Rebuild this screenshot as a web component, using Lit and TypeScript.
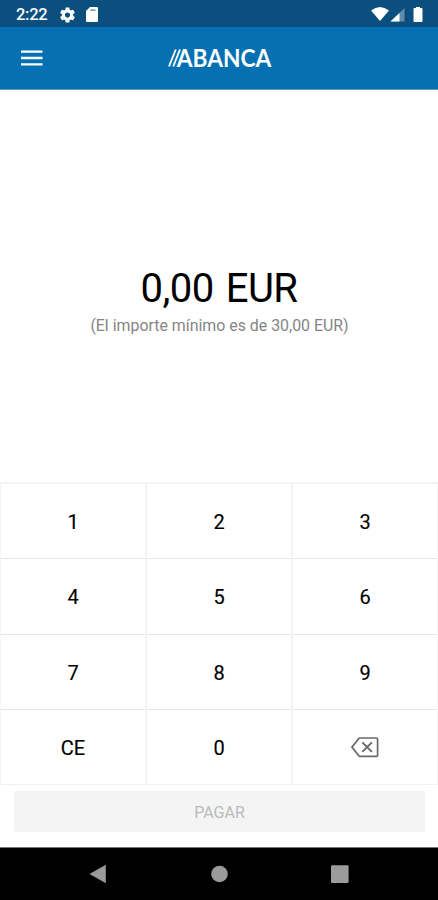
import { LitElement, html, css, svg } from "lit";
import { customElement } from "lit/decorators.js";

const backspace = svg`
  <path d="M8.2 1H25.6Q26.6 1 26.6 2V18.3Q26.6 19.3 25.6 19.3H8.2L1 10.15Z" fill="none" stroke="#6a6a6a" stroke-width="1.7" stroke-linejoin="round"/>
  <path d="M11.3 5.4L20.9 14.9M20.9 5.4L11.3 14.9" stroke="#6a6a6a" stroke-width="2"/>`;

@customElement("app-root")
export class AppRoot extends LitElement {
  static styles = css`
    :host {
      display: flex;
      flex-direction: column;
      width: 438px;
      height: 900px;
      background: #fff;
      font-family: Roboto, "Liberation Sans", sans-serif;
      color: #000;
      overflow: hidden;
    }
    svg { display: block; flex: none; }
    .status {
      height: 27px;
      background: #0a4f7d;
      color: #fff;
      display: flex;
      align-items: center;
      padding: 2px 15px 0 16px;
      box-sizing: border-box;
      flex: none;
    }
    .time { font-size: 16.5px; font-weight: 500; width: 44px; line-height: 20px; letter-spacing: -0.3px; }
    .sd { margin-left: 11px; }
    .grow { flex: 1; }
    .bar {
      height: 63px;
      box-sizing: border-box;
      border-bottom: 1px solid #5d9bc7;
      background: #0571b3;
      display: grid;
      grid-template-columns: 64px 1fr 64px;
      align-items: center;
      flex: none;
    }
    .menu { margin-left: 21px; }
    .logo { margin: 0 auto 0 104px; }
    .brand { font: 700 24px Lato, sans-serif; fill: #fff; }
    .amount {
      flex: 1;
      display: flex;
      flex-direction: column;
      align-items: center;
      padding-top: 174px;
      box-sizing: border-box;
    }
    .total { font-size: 40px; line-height: 50px; letter-spacing: -0.6px; word-spacing: 3px; white-space: nowrap; }
    .hint { font-size: 15.9px; line-height: 24px; color: #858585; white-space: nowrap; padding-left: 1px; }
    .keys {
      flex: none;
      height: 303px;
      box-sizing: border-box;
      display: grid;
      grid-template-columns: repeat(3, 1fr);
      grid-template-rows: repeat(4, 1fr);
      column-gap: 2px;
      padding: 2px 1px 0 1px;
      background: #f4f4f4;
    }
    .key {
      background: #fff;
      display: flex;
      align-items: center;
      justify-content: center;
      font-size: 20px;
      -webkit-text-stroke: 0.15px #000;
      padding-top: 2px;
      border-bottom: 1px solid #e7e7e7;
    }
    .key:nth-last-child(-n + 3) { border-bottom-color: #f2f2f2; }
    .pay {
      flex: none;
      height: 41px;
      margin: 6px 13.5px 15px 13.5px;
      background: #f4f4f4;
      border-radius: 2px;
      color: #bababa;
      display: flex;
      align-items: center;
      justify-content: center;
      font-size: 16px;
      padding-top: 1px;
      padding-left: 1px;
      box-sizing: border-box;
    }
    .nav { flex: none; height: 53px; background: #000; border-top: 1px solid #777; box-sizing: border-box; }
  `;

  render() {
    const keys = ["1", "2", "3", "4", "5", "6", "7", "8", "9", "CE", "0", ""];
    return html`
      <div class="status">
        <span class="time">2:22</span>
        <svg width="15" height="16" viewBox="2 2 20 20"><path fill="#fff" d="M19.43 12.98c.04-.32.07-.64.07-.98s-.03-.66-.07-.98l2.11-1.65c.19-.15.24-.42.12-.64l-2-3.46c-.12-.22-.39-.3-.61-.22l-2.49 1c-.52-.4-1.08-.73-1.69-.98l-.38-2.65C14.46 2.18 14.25 2 14 2h-4c-.25 0-.46.18-.49.42l-.38 2.65c-.61.25-1.17.59-1.69.98l-2.49-1c-.23-.09-.49 0-.61.22l-2 3.46c-.13.22-.07.49.12.64l2.11 1.65c-.04.32-.07.65-.07.98s.03.66.07.98l-2.11 1.65c-.19.15-.24.42-.12.64l2 3.46c.12.22.39.3.61.22l2.49-1c.52.4 1.08.73 1.69.98l.38 2.65c.03.24.24.42.49.42h4c.25 0 .46-.18.49-.42l.38-2.65c.61-.25 1.17-.59 1.69-.98l2.49 1c.23.09.49 0 .61-.22l2-3.46c.12-.22.07-.49-.12-.64l-2.11-1.65zM12 15.5c-1.93 0-3.5-1.57-3.5-3.5s1.57-3.5 3.5-3.5 3.5 1.57 3.5 3.5-1.57 3.5-3.5 3.5z"/></svg>
        <svg class="sd" width="12" height="15" viewBox="0 0 12 15"><path fill="#fff" d="M4 0H10.8Q12 0 12 1.2V13.8Q12 15 10.8 15H1.2Q0 15 0 13.8V4Z"/><path d="M4.2 3.1H9.6" stroke="#6d93b0" stroke-width="1.4"/></svg>
        <span class="grow"></span>
        <svg width="52" height="16" viewBox="0 0 52 16">
          <path fill="#fff" d="M0 3.5Q9 -3.5 18 3.5L9 14Z"/>
          <path fill="#5f8cab" d="M33.5 1V14.5H19.5Z"/>
          <path fill="#fff" d="M28.5 6V14.5H19.5Z"/>
          <path fill="#fff" d="M43.4 1.1H45V0H49V1.1H50.6Q51.5 1.1 51.5 2V14Q51.5 14.9 50.6 14.9H43.4Q42.5 14.9 42.5 14V2Q42.5 1.1 43.4 1.1Z"/>
        </svg>
      </div>
      <div class="bar">
        <svg class="menu" width="22" height="16" viewBox="0 0 22 16"><path d="M0 1.6H21.5M0 8H21.5M0 14.4H21.5" stroke="#fff" stroke-width="2.4"/></svg>
        <svg class="logo" width="110" height="36" viewBox="0 0 110 36">
          <path d="M1 26.5L7.8 9.5M5.2 26.5L12 9.5" stroke="#fff" stroke-width="1.9"/>
          <text class="brand" x="8.7" y="26.5" textLength="94.5" lengthAdjust="spacingAndGlyphs">ABANCA</text>
        </svg>
      </div>
      <div class="amount">
        <div class="total">0,00 EUR</div>
        <div class="hint">(El importe mínimo es de 30,00 EUR)</div>
      </div>
      <div class="keys">
        ${keys.map((k) => html`<div class="key">${k || html`<svg width="28" height="21" viewBox="0 0 28 21">${backspace}</svg>`}</div>`)}
      </div>
      <div class="pay">PAGAR</div>
      <div class="nav">
        <svg width="438" height="52" viewBox="0 0 438 52" fill="#9b9b9b">
          <path d="M90 26L105.5 17.2V34.8Z" stroke="#9b9b9b" stroke-width=".6" stroke-linejoin="round"/>
          <circle cx="219.5" cy="26" r="8.3"/>
          <rect x="331" y="17.3" width="17.6" height="17.6" rx="1"/>
        </svg>
      </div>
    `;
  }
}
